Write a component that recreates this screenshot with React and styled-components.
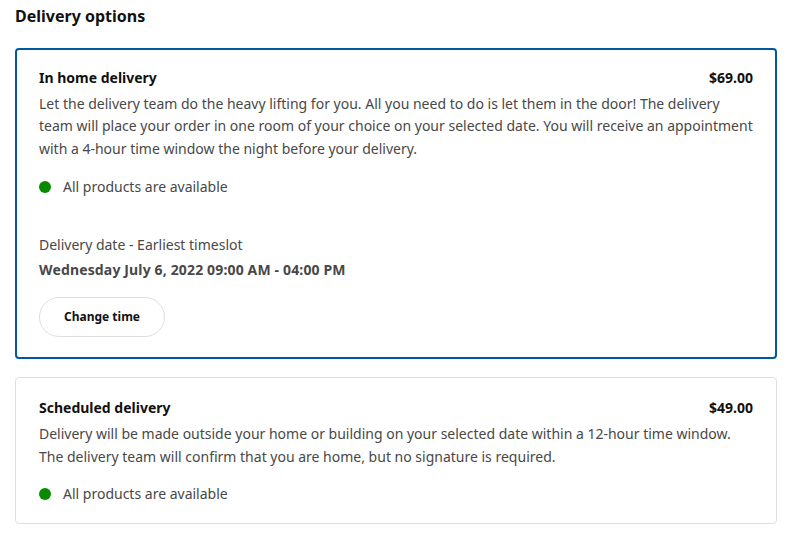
import styled, { createGlobalStyle } from 'styled-components';

const GlobalStyle = createGlobalStyle`
  body {
    margin: 0;
    background: #fff;
    font-family: "Noto Sans", "Open Sans", sans-serif;
    color: #484848;
  }
`;

const Page = styled.div`
  padding: 4px 14px 10px 15px;
`;

const Title = styled.h2`
  margin: 0 0 20px;
  font-size: 16px;
  line-height: 24px;
  font-weight: 700;
  color: #111;
`;

const Options = styled.div`
  display: flex;
  flex-direction: column;
  gap: 18px;
`;

const Card = styled.div`
  border: ${(p) => (p.selected ? '2px solid #0058a3' : '1px solid #dfdfdf')};
  border-radius: 4px;
  padding: ${(p) => (p.selected ? '17px 22px 20px 22px' : '19px 23px 18px 23px')};
`;

const Header = styled.div`
  display: flex;
  justify-content: space-between;
  align-items: center;
  font-size: 14px;
  line-height: 22px;
  font-weight: 700;
  color: #111;
`;

const Description = styled.p`
  margin: 4px 0 0;
  font-size: 14px;
  line-height: 22.4px;
`;

const Availability = styled.div`
  display: flex;
  align-items: center;
  gap: 12px;
  margin-top: ${(p) => p.gap}px;
  font-size: 14px;
  line-height: 22px;
`;

const Dot = styled.span`
  width: 12px;
  height: 12px;
  border-radius: 50%;
  background: #0a8a00;
  flex-shrink: 0;
`;

const DateLabel = styled.div`
  margin-top: 36px;
  font-size: 14px;
  line-height: 22px;
`;

const DateValue = styled.div`
  margin-top: 3px;
  font-size: 14px;
  line-height: 22px;
  font-weight: 700;
  letter-spacing: 0.15px;
`;

const Button = styled.button`
  margin-top: 16px;
  height: 40px;
  width: 126px;
  border: 1px solid #dfdfdf;
  border-radius: 20px;
  background: #fff;
  font-family: inherit;
  font-size: 12px;
  font-weight: 700;
  color: #111;
  padding-bottom: 2px;
  cursor: pointer;
`;

const options = [
  {
    id: 'in-home',
    name: 'In home delivery',
    price: '$69.00',
    text: 'Let the delivery team do the heavy lifting for you. All you need to do is let them in the door! The delivery team will place your order in one room of your choice on your selected date. You will receive an appointment with a 4-hour time window the night before your delivery.',
    selected: true,
  },
  {
    id: 'scheduled',
    name: 'Scheduled delivery',
    price: '$49.00',
    text: 'Delivery will be made outside your home or building on your selected date within a 12-hour time window. The delivery team will confirm that you are home, but no signature is required.',
    selected: false,
  },
];

export default function App() {
  return (
    <>
      <GlobalStyle />
      <Page>
        <Title>Delivery options</Title>
        <Options>
          {options.map((opt) => (
            <Card key={opt.id} selected={opt.selected}>
              <Header>
                <span>{opt.name}</span>
                <span>{opt.price}</span>
              </Header>
              <Description>{opt.text}</Description>
              <Availability gap={opt.selected ? 16 : 15}>
                <Dot />
                All products are available
              </Availability>
              {opt.selected && (
                <>
                  <DateLabel>Delivery date - Earliest timeslot</DateLabel>
                  <DateValue>Wednesday July 6, 2022 09:00 AM - 04:00 PM</DateValue>
                  <Button type="button">Change time</Button>
                </>
              )}
            </Card>
          ))}
        </Options>
      </Page>
    </>
  );
}
